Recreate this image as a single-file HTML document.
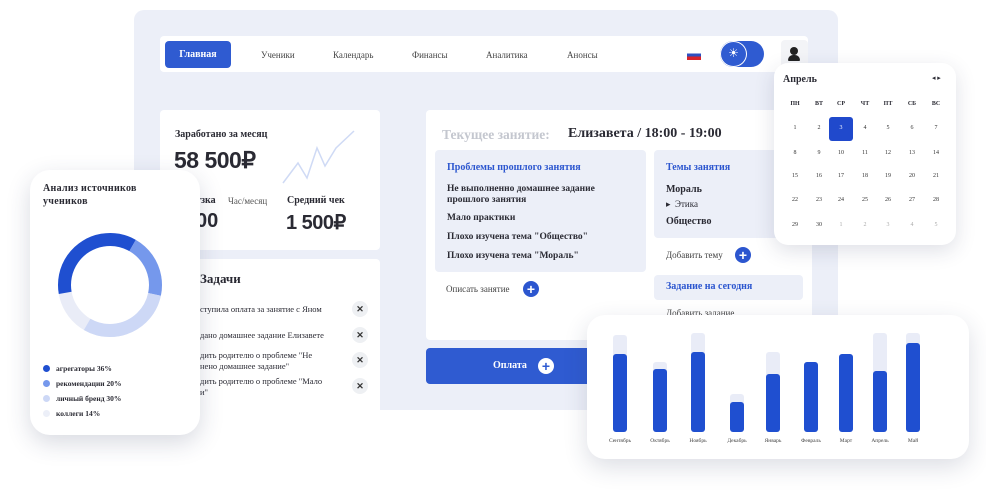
<!DOCTYPE html>
<html><head><meta charset="utf-8"><style>
*{margin:0;padding:0;box-sizing:border-box}
body{width:986px;height:493px;background:#fff;position:relative;overflow:hidden;font-family:"Liberation Serif","DejaVu Serif",serif;color:#2a2a33}
.a{position:absolute;white-space:nowrap}
.b{font-weight:bold}
.s{font-family:"Liberation Sans",sans-serif}
.blue{color:#2c56cf}
.plus{position:absolute;width:16px;height:16px;border-radius:50%;background:#2c56cf;color:#fff;font:bold 14px/16px "Liberation Sans",sans-serif;text-align:center}
.x{position:absolute;width:16px;height:16px;border-radius:50%;background:#eef0f3;font:bold 9px/16px "Liberation Sans",sans-serif;text-align:center;color:#333}
.card{position:absolute;background:#fff}
</style></head><body>
<div class="a" style="left:134px;top:10px;width:704px;height:400px;background:#eceff8;border-radius:10px"></div>
<!-- nav -->
<div class="card" style="left:160px;top:36px;width:648px;height:36px;border-radius:4px"></div>
<div class="a b" style="left:165px;top:41px;width:66px;height:27px;background:#2f5bd1;border-radius:4px;color:#fff;font-size:10px;line-height:27px;text-align:center">Главная</div>
<div class="a" style="left:261px;top:50px;font-size:9px;color:#444">Ученики</div>
<div class="a" style="left:333px;top:50px;font-size:9px;color:#444">Календарь</div>
<div class="a" style="left:412px;top:50px;font-size:9px;color:#444">Финансы</div>
<div class="a" style="left:486px;top:50px;font-size:9px;color:#444">Аналитика</div>
<div class="a" style="left:567px;top:50px;font-size:9px;color:#444">Анонсы</div>
<div class="a" style="left:687px;top:50px;width:14px;height:10px;background:linear-gradient(#fff 0 33%,#2d4fc0 33% 66%,#d8232a 66%)"></div>
<div class="a" style="left:720px;top:41px;width:44px;height:26px;border-radius:13px;background:#2f5bd1"></div>
<div class="a" style="left:720px;top:41px;width:27px;height:26px;border-radius:50%;background:#2f5bd1;border:1.5px solid #fff;color:#fff;font:12px/23px sans-serif;text-align:center">☀</div>
<div class="a" style="left:781px;top:40px;width:27px;height:28px;border-radius:4px;background:#f3f4f7"></div>
<div class="a" style="left:790px;top:47px;width:8px;height:8px;border-radius:50%;background:#222"></div>
<div class="a" style="left:788px;top:55px;width:12px;height:6px;border-radius:5px 5px 1px 1px;background:#222"></div>
<!-- earned card -->
<div class="card" style="left:160px;top:110px;width:220px;height:140px;border-radius:4px"></div>
<div class="a b" style="left:175px;top:129px;font-size:10px">Заработано за месяц</div>
<div class="a b s" style="left:174px;top:147px;font-size:23px;letter-spacing:-0.5px">58 500₽</div>
<svg class="a" style="left:280px;top:128px" width="80" height="60"><polyline points="3,55 18,35 27,50 37,20 45,38 56,20 74,3" fill="none" stroke="#cfdaf5" stroke-width="1.5"/></svg>
<div class="a b" style="left:196px;top:195px;font-size:10px">узка</div>
<div class="a" style="left:228px;top:196px;font-size:9px;color:#555">Час/месяц</div>
<div class="a b" style="left:287px;top:195px;font-size:10px">Средний чек</div>
<div class="a b s" style="left:196px;top:210px;font-size:20px">00</div>
<div class="a b s" style="left:286px;top:210px;font-size:20px;letter-spacing:-0.5px">1 500₽</div>
<!-- tasks -->
<div class="card" style="left:160px;top:259px;width:220px;height:151px;border-radius:4px 4px 0 0"></div>
<div class="a b" style="left:200px;top:271px;font-size:13px">Задачи</div>
<div class="a" style="left:200px;top:304px;font-size:8.5px">ступила оплата за занятие с Яном</div>
<div class="a" style="left:200px;top:330px;font-size:8.5px">дано домашнее задание Елизавете</div>
<div class="a" style="left:200px;top:350px;font-size:8.5px;line-height:11px">дить родителю о проблеме "Не<br>нено домашнее задание"</div>
<div class="a" style="left:200px;top:376px;font-size:8.5px;line-height:11px">дить родителю о проблеме "Мало<br>и"</div>
<div class="x" style="left:352px;top:301px">✕</div>
<div class="x" style="left:352px;top:327px">✕</div>
<div class="x" style="left:352px;top:352px">✕</div>
<div class="x" style="left:352px;top:378px">✕</div>
<!-- current lesson -->
<div class="card" style="left:426px;top:110px;width:386px;height:230px;border-radius:4px"></div>
<div class="a b" style="left:442px;top:127px;font-size:13.5px;color:#c4c7cf">Текущее занятие:</div>
<div class="a b" style="left:568px;top:126px;font-size:14px">Елизавета / 18:00 - 19:00</div>
<div class="a" style="left:435px;top:150px;width:211px;height:122px;background:#eceff8;border-radius:4px"></div>
<div class="a b blue" style="left:447px;top:162px;font-size:10px">Проблемы прошлого занятия</div>
<div class="a b" style="left:447px;top:184px;font-size:9.5px;line-height:11px">Не выполненно домашнее задание<br>прошлого занятия</div>
<div class="a b" style="left:447px;top:213px;font-size:9.5px">Мало практики</div>
<div class="a b" style="left:447px;top:232px;font-size:9.5px">Плохо изучена тема "Общество"</div>
<div class="a b" style="left:447px;top:251px;font-size:9.5px">Плохо изучена тема "Мораль"</div>
<div class="a" style="left:446px;top:284px;font-size:9px;color:#444">Описать занятие</div>
<div class="plus" style="left:523px;top:281px">+</div>
<div class="a" style="left:654px;top:150px;width:150px;height:88px;background:#eceff8;border-radius:4px"></div>
<div class="a b blue" style="left:666px;top:162px;font-size:10px">Темы занятия</div>
<div class="a b" style="left:666px;top:184px;font-size:10px">Мораль</div>
<div class="a" style="left:666px;top:199px;font-size:9px">▸ &nbsp;Этика</div>
<div class="a b" style="left:666px;top:216px;font-size:10px">Общество</div>
<div class="a" style="left:666px;top:250px;font-size:9px;color:#444">Добавить тему</div>
<div class="plus" style="left:735px;top:247px">+</div>
<div class="a" style="left:654px;top:275px;width:149px;height:25px;background:#eceff8;border-radius:4px"></div>
<div class="a b blue" style="left:666px;top:281px;font-size:10px">Задание на сегодня</div>
<div class="a" style="left:666px;top:308px;font-size:9px;color:#444">Добавить задание</div>
<div class="a" style="left:426px;top:348px;width:230px;height:36px;background:#2f5bd1;border-radius:4px"></div>
<div class="a b" style="left:493px;top:360px;font-size:10px;color:#fff">Оплата</div>
<div class="plus" style="left:538px;top:358px;background:#fff;color:#2f5bd1">+</div>
<!-- calendar -->
<div class="card" style="left:774px;top:63px;width:182px;height:182px;border-radius:14px;box-shadow:0 6px 20px rgba(40,50,90,.15)"></div>
<div class="a b" style="left:783px;top:74px;font-size:10px">Апрель</div>
<div class="a" style="left:932px;top:74px;font-size:7px">◂ ▸</div>
<div class="a" style="left:829px;top:117px;width:24px;height:24px;background:#2049cc;border-radius:3px"></div>
<div id="cal"></div>
<!-- donut card -->
<div class="card" style="left:30px;top:170px;width:170px;height:265px;border-radius:20px;box-shadow:0 8px 24px rgba(40,50,90,.18)"></div>
<div class="a b" style="left:43px;top:182px;font-size:10px;line-height:13px;letter-spacing:.3px">Анализ источников<br>учеников</div>
<svg class="a" style="left:52px;top:227px" width="116" height="116" viewBox="0 0 116 116">
<g transform="rotate(170 58 58)" fill="none" stroke-width="13">
<circle cx="58" cy="58" r="45.5" stroke="#e9ecf7"/>
<circle cx="58" cy="58" r="45.5" stroke="#1f4fd0" stroke-dasharray="102.9 300"/>
<circle cx="58" cy="58" r="45.5" stroke="#7598ec" stroke-dasharray="57.2 300" stroke-dashoffset="-102.9"/>
<circle cx="58" cy="58" r="45.5" stroke="#cdd8f6" stroke-dasharray="85.8 300" stroke-dashoffset="-160.1"/>
</g></svg>
<div class="a" style="left:43px;top:365px;width:7px;height:7px;border-radius:50%;background:#1f4fd0"></div>
<div class="a" style="left:43px;top:380px;width:7px;height:7px;border-radius:50%;background:#7598ec"></div>
<div class="a" style="left:43px;top:395px;width:7px;height:7px;border-radius:50%;background:#cdd8f6"></div>
<div class="a" style="left:43px;top:410px;width:7px;height:7px;border-radius:50%;background:#eceff8"></div>
<div class="a b" style="left:56px;top:364px;font-size:7.5px">агрегаторы 36%</div>
<div class="a b" style="left:56px;top:379px;font-size:7.5px">рекомендации 20%</div>
<div class="a b" style="left:56px;top:394px;font-size:7.5px">личный бренд 30%</div>
<div class="a b" style="left:56px;top:409px;font-size:7.5px">коллеги 14%</div>
<!-- chart -->
<div class="card" style="left:587px;top:315px;width:382px;height:144px;border-radius:18px;box-shadow:0 8px 24px rgba(40,50,90,.16)"></div>
<div id="bars"></div>
<script>
var cols=[795,819,841,865,888,912,936],h=['пн','вт','ср','чт','пт','сб','вс'],s='';
h.forEach(function(t,i){s+='<div class="a b" style="left:'+(cols[i]-10)+'px;width:20px;text-align:center;top:101px;font-size:6px">'+t.toUpperCase()+'</div>'});
var rows=[129,154,177,201,226],d=1;
for(var r=0;r<5;r++)for(var c=0;c<7;c++){var n=d<=30?d:d-30;var col=d>30?'#aaa':(d==3?'#fff':'#333');s+='<div class="a" style="left:'+(cols[c]-10)+'px;width:20px;text-align:center;top:'+(rows[r]-4)+'px;font-size:6px;color:'+col+'">'+n+'</div>';d++}
document.getElementById('cal').innerHTML=s;
var B=[[620,335,354,'Сентябрь'],[660,362,369,'Октябрь'],[698,333,352,'Ноябрь'],[737,394,402,'Декабрь'],[773,352,374,'Январь'],[811,362,362,'Февраль'],[846,354,354,'Март'],[880,333,371,'Апрель'],[913,333,343,'Май']],o='';
B.forEach(function(b){o+='<div class="a" style="left:'+(b[0]-7)+'px;top:'+b[1]+'px;width:14px;height:'+(432-b[1])+'px;background:#e9ecf7;border-radius:3px"></div><div class="a" style="left:'+(b[0]-7)+'px;top:'+b[2]+'px;width:14px;height:'+(432-b[2])+'px;background:#1f4fd0;border-radius:3px"></div><div class="a" style="left:'+(b[0]-20)+'px;width:40px;text-align:center;top:438px;font-size:5.5px;color:#444">'+b[3]+'</div>'});
document.getElementById('bars').innerHTML=o;
</script>
</body></html>
